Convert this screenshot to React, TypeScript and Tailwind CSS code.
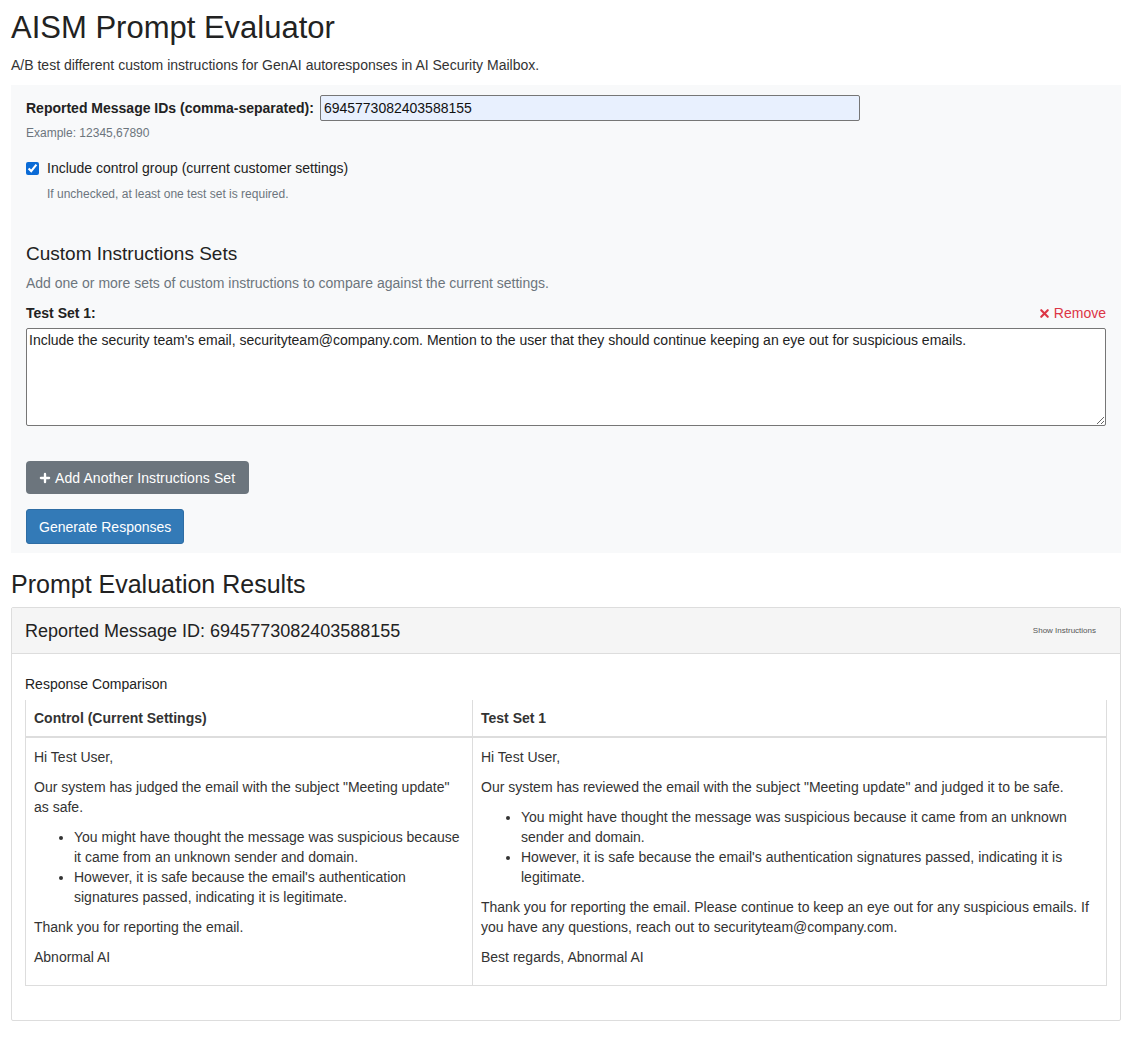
import React from "react";
import { Plus, X } from "lucide-react";

const font = { fontFamily: '"Liberation Sans", Arial, Helvetica, sans-serif' };

function ControlResponse() {
  return (
    <div>
      <p className="mb-[10px]">Hi Test User,</p>
      <p className="mb-[10px]">
        Our system has judged the email with the subject "Meeting update" as safe.
      </p>
      <ul className="mb-[10px] list-disc pl-[40px]">
        <li>
          You might have thought the message was suspicious because it came from an unknown sender
          and domain.
        </li>
        <li>
          However, it is safe because the email's authentication signatures passed, indicating it is
          legitimate.
        </li>
      </ul>
      <p className="mb-[10px]">Thank you for reporting the email.</p>
      <p className="mb-[10px]">Abnormal AI</p>
    </div>
  );
}

function TestSetResponse() {
  return (
    <div>
      <p className="mb-[10px]">Hi Test User,</p>
      <p className="mb-[10px]">
        Our system has reviewed the email with the subject "Meeting update" and judged it to be safe.
      </p>
      <ul className="mb-[10px] list-disc pl-[40px]">
        <li>
          You might have thought the message was suspicious because it came from an unknown sender
          and domain.
        </li>
        <li>
          However, it is safe because the email's authentication signatures passed, indicating it is
          legitimate.
        </li>
      </ul>
      <p className="mb-[10px]">
        Thank you for reporting the email. Please continue to keep an eye out for any suspicious
        emails. If you have any questions, reach out to securityteam@company.com.
      </p>
      <p className="mb-[10px]">Best regards, Abnormal AI</p>
    </div>
  );
}

export default function App() {
  return (
    <div
      style={font}
      className="min-h-[1037px] bg-white pr-[21px] pl-[11px] pb-[16px] text-[14px] leading-[20px] text-[#333]"
    >
      <h1 className="pt-[11px] text-[31px] leading-[34px] font-normal text-[#222]">
        AISM Prompt Evaluator
      </h1>
      <p className="mt-[10px]">
        A/B test different custom instructions for GenAI autoresponses in AI Security Mailbox.
      </p>

      {/* evaluation form */}
      <div className="mt-[10px] bg-[#f8f9fa] px-[15px] pt-[10px] pb-[9px]">
        <div className="flex items-center">
          <label className="font-bold text-[#222]">Reported Message IDs (comma-separated):</label>
          <input
            readOnly
            value="6945773082403588155"
            className="ml-[6px] h-[26px] w-[540px] rounded-[2px] border border-[#767676] bg-[#e8f0fe] px-[3px] text-[14px] text-[#111] outline-none"
            style={font}
          />
        </div>
        <div className="mt-[4px] text-[12px] leading-[17px] text-[#6c757d]">Example: 12345,67890</div>

        <div className="mt-[16px] flex items-center">
          <input
            type="checkbox"
            defaultChecked
            className="m-0 h-[13px] w-[13px] accent-[#0b6bd6]"
          />
          <label className="ml-[8px] text-[#222]">Include control group (current customer settings)</label>
        </div>
        <div className="mt-[8px] pl-[21px] text-[12px] leading-[17px] text-[#6c757d]">
          If unchecked, at least one test set is required.
        </div>

        <h3 className="mt-[41px] text-[19px] leading-[20px] font-normal text-[#222]">
          Custom Instructions Sets
        </h3>
        <p className="mt-[9px] text-[#6c757d]">
          Add one or more sets of custom instructions to compare against the current settings.
        </p>

        <div className="mt-[10px] flex items-center justify-between">
          <label className="font-bold text-[#222]">Test Set 1:</label>
          <button className="flex items-center gap-[3px] text-[#dc3545]">
            <X size={13} strokeWidth={4} />
            <span>Remove</span>
          </button>
        </div>
        <textarea
          readOnly
          value="Include the security team's email, securityteam@company.com. Mention to the user that they should continue keeping an eye out for suspicious emails."
          className="mt-[5px] block h-[98px] w-full rounded-[2px] border border-[#767676] bg-white px-[2px] py-[1px] text-[14px] leading-[20px] text-[#222] outline-none"
          style={font}
        />

        <button className="mt-[35px] flex h-[33px] items-center gap-[3px] rounded-[4px] bg-[#6c757d] pr-[14px] pl-[12px] text-white">
          <Plus size={14} strokeWidth={4} />
          <span className="tracking-[0.1px]">Add Another Instructions Set</span>
        </button>
        <button className="mt-[15px] flex h-[35px] items-center rounded-[3px] border border-[#2e6da4] bg-[#337ab7] px-[12px] text-white">
          Generate Responses
        </button>
      </div>

      <h2 className="mt-[18px] text-[25px] leading-[26px] font-normal text-[#222]">
        Prompt Evaluation Results
      </h2>

      {/* result card */}
      <div className="mt-[10px] rounded-[2px] border border-[#ddd]">
        <div className="flex h-[46px] items-center justify-between border-b border-[#ddd] bg-[#f5f5f5] px-[13px]">
          <h4 className="pt-[1px] text-[18px] leading-[20px] font-normal text-[#222]">
            Reported Message ID: 6945773082403588155
          </h4>
          <button className="mr-[11px] text-[8px] text-[#555]">Show Instructions</button>
        </div>
        <div className="px-[13px] pt-[20px] pb-[34px]">
          <h5 className="text-[14px] leading-[20px] text-[#222]">Response Comparison</h5>
          <table className="mt-[6px] w-full border-collapse">
            <thead>
              <tr>
                <th className="w-[447px] border-x border-b-2 border-[#ddd] px-[8px] py-[8px] text-left font-bold">
                  Control (Current Settings)
                </th>
                <th className="border-x border-b-2 border-[#ddd] px-[8px] py-[8px] text-left font-bold">
                  Test Set 1
                </th>
              </tr>
            </thead>
            <tbody>
              <tr>
                <td className="border border-[#ddd] px-[8px] pt-[9px] pb-[8px] align-top">
                  <ControlResponse />
                </td>
                <td className="border border-[#ddd] px-[8px] pt-[9px] pb-[8px] align-top">
                  <TestSetResponse />
                </td>
              </tr>
            </tbody>
          </table>
        </div>
      </div>
    </div>
  );
}
